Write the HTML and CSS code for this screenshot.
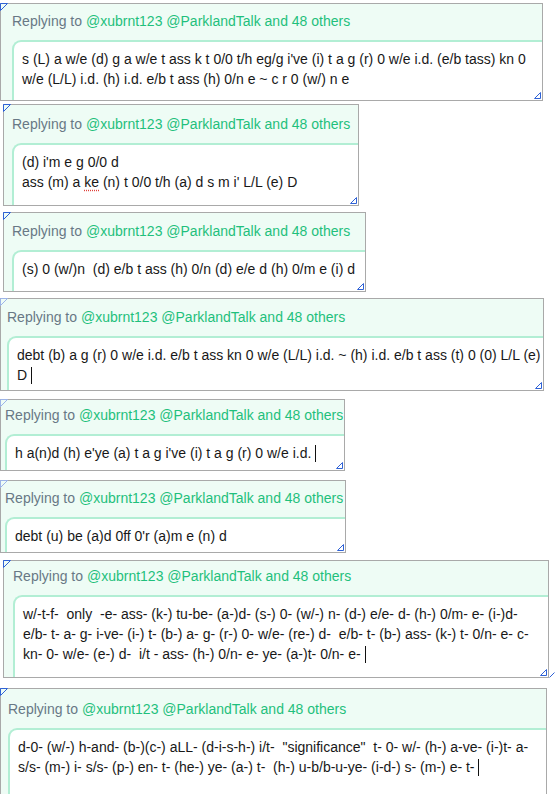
FILE: index.html
```html
<!DOCTYPE html>
<html lang="en">
<head>
    <meta charset="UTF-8">
    <meta name="viewport" content="width=device-width, initial-scale=1.0">
    <title>Replies</title>
    <link rel="stylesheet" href="styles.css">
</head>
<body>
    <div class="shot shot-1">
        <div class="clip">
            <div class="reply-to">Replying to <span class="handles">@xubrnt123 @ParklandTalk and 48 others</span></div>
            <div class="box"><p class="text">s (L) a w/e (d) g a w/e t ass k t 0/0 t/h eg/g i've (i) t a g (r) 0 w/e i.d. (e/b tass) kn 0<br>w/e (L/L) i.d. (h) i.d. e/b t ass (h) 0/n e ~ c r 0 (w/) n e</p></div>
        </div>
        <svg class="mark-tl" width="8" height="8" viewBox="0 0 8 8"><path d="M0.5 7.5V0.5H7.5Z"/></svg>
        <svg class="grip" width="7" height="7" viewBox="0 0 7 7"><path d="M0.5 6.5L6.5 0.5V6.5Z"/></svg>
    </div>

    <div class="shot shot-2">
        <div class="clip">
            <div class="reply-to">Replying to <span class="handles">@xubrnt123 @ParklandTalk and 48 others</span></div>
            <div class="box"><p class="text">(d) i'm e g 0/0 d<br>ass (m) a <span class="typo">ke</span> (n) t 0/0 t/h (a) d s m i' L/L (e) D</p></div>
        </div>
        <svg class="mark-tl" width="8" height="8" viewBox="0 0 8 8"><path d="M0.5 7.5V0.5H7.5Z"/></svg>
        <svg class="grip" width="7" height="7" viewBox="0 0 7 7"><path d="M0.5 6.5L6.5 0.5V6.5Z"/></svg>
    </div>

    <div class="shot shot-3">
        <div class="clip">
            <div class="reply-to">Replying to <span class="handles">@xubrnt123 @ParklandTalk and 48 others</span></div>
            <div class="box"><p class="text">(s) 0 (w/)n  (d) e/b t ass (h) 0/n (d) e/e d (h) 0/m e (i) d</p></div>
        </div>
        <svg class="mark-tl" width="8" height="8" viewBox="0 0 8 8"><path d="M0.5 7.5V0.5H7.5Z"/></svg>
        <svg class="grip" width="7" height="7" viewBox="0 0 7 7"><path d="M0.5 6.5L6.5 0.5V6.5Z"/></svg>
    </div>

    <div class="shot shot-4">
        <div class="clip">
            <div class="reply-to">Replying to <span class="handles">@xubrnt123 @ParklandTalk and 48 others</span></div>
            <div class="box"><p class="text">debt (b) a g (r) 0 w/e i.d. e/b t ass kn 0 w/e (L/L) i.d. ~ (h) i.d. e/b t ass (t) 0 (0) L/L (e)<br>D <span class="caret"></span></p></div>
        </div>
        <svg class="mark-tl faint" width="8" height="8" viewBox="0 0 8 8"><path d="M0.5 7.5V0.5H7.5Z"/></svg>
        <svg class="grip" width="7" height="7" viewBox="0 0 7 7"><path d="M0.5 6.5L6.5 0.5V6.5Z"/></svg>
    </div>

    <div class="shot shot-5">
        <div class="clip">
            <div class="reply-to">Replying to <span class="handles">@xubrnt123 @ParklandTalk and 48 others</span></div>
            <div class="box"><p class="text">h a(n)d (h) e'ye (a) t a g i've (i) t a g (r) 0 w/e i.d. <span class="caret"></span></p></div>
        </div>
        <svg class="mark-tl faint" width="8" height="8" viewBox="0 0 8 8"><path d="M0.5 7.5V0.5H7.5Z"/></svg>
        <svg class="grip" width="7" height="7" viewBox="0 0 7 7"><path d="M0.5 6.5L6.5 0.5V6.5Z"/></svg>
    </div>

    <div class="shot shot-6">
        <div class="clip">
            <div class="reply-to">Replying to <span class="handles">@xubrnt123 @ParklandTalk and 48 others</span></div>
            <div class="box"><p class="text">debt (u) be (a)d 0ff 0'r (a)m e (n) d</p></div>
        </div>
        <svg class="mark-tl faint" width="8" height="8" viewBox="0 0 8 8"><path d="M0.5 7.5V0.5H7.5Z"/></svg>
        <svg class="grip" width="7" height="7" viewBox="0 0 7 7"><path d="M0.5 6.5L6.5 0.5V6.5Z"/></svg>
    </div>

    <div class="shot shot-7">
        <div class="clip">
            <div class="reply-to">Replying to <span class="handles">@xubrnt123 @ParklandTalk and 48 others</span></div>
            <div class="box"><p class="text">w/-t-f-  only  -e- ass- (k-) tu-be- (a-)d- (s-) 0- (w/-) n- (d-) e/e- d- (h-) 0/m- e- (i-)d-<br>e/b- t- a- g- i-ve- (i-) t- (b-) a- g- (r-) 0- w/e- (re-) d-  e/b- t- (b-) ass- (k-) t- 0/n- e- c-<br>kn- 0- w/e- (e-) d-  i/t - ass- (h-) 0/n- e- ye- (a-)t- 0/n- e- <span class="caret"></span></p></div>
        </div>
        <svg class="mark-tl" width="8" height="8" viewBox="0 0 8 8"><path d="M0.5 7.5V0.5H7.5Z"/></svg>
        <svg class="grip" width="7" height="7" viewBox="0 0 7 7"><path d="M0.5 6.5L6.5 0.5V6.5Z"/></svg>
        <svg class="grip-out" width="6" height="6" viewBox="0 0 6 6"><path d="M0.5 5.5L5.5 0.5"/></svg>
    </div>

    <div class="shot shot-8">
        <div class="clip">
            <div class="reply-to">Replying to <span class="handles">@xubrnt123 @ParklandTalk and 48 others</span></div>
            <div class="box"><p class="text">d-0- (w/-) h-and- (b-)(c-) aLL- (d-i-s-h-) i/t-  "significance"  t- 0- w/- (h-) a-ve- (i-)t- a-<br>s/s- (m-) i- s/s- (p-) en- t- (he-) ye- (a-) t-  (h-) u-b/b-u-ye- (i-d-) s- (m-) e- t- <span class="caret"></span></p></div>
        </div>
        <svg class="mark-tl" width="8" height="8" viewBox="0 0 8 8"><path d="M0.5 7.5V0.5H7.5Z"/></svg>
    </div>
</body>
</html>
```

FILE: styles.css
```css
body {
    margin: 0;
    background: #ffffff;
    font-family: 'Liberation Sans', Arial, sans-serif;
}

.shot {
    position: relative;
    box-sizing: border-box;
    border: 1px solid #a9a9a9;
    background-color: #eefcf5;
}
.clip {
    box-sizing: border-box;
    height: 100%;
    overflow: hidden;
}

.reply-to {
    font-size: 14px;
    line-height: 20px;
    color: #687885;
    white-space: nowrap;
    padding-bottom: 9px;
}
.handles {
    color: #1fc07c;
}

.box {
    background-color: white;
    border-top: 2px solid #b2eed4;
    border-left: 2px solid #b2eed4;
    border-top-left-radius: 9px;
    padding: 7px 0 0 8px;
    margin-right: -40px;
    height: 300px;
}
.text {
    margin: 0;
    font-size: 14px;
    line-height: 20px;
    color: #181818;
    white-space: pre;
}
.typo {
    text-decoration: underline dotted #e0403a;
    text-underline-offset: 3px;
}
.caret {
    display: inline-block;
    width: 1px;
    height: 17px;
    background-color: #111;
    vertical-align: -4px;
}

/* selection marks left on the screenshot */
.mark-tl, .grip, .grip-out {
    position: absolute;
    fill: none;
    stroke: #2f62d6;
    stroke-width: 1;
}
.mark-tl {
    top: -1px;
    left: -1px;
}
.mark-tl.faint {
    stroke: #9db4e8;
}
.grip {
    right: 1px;
    bottom: 1px;
}
.grip-out {
    right: -7px;
    bottom: -1px;
}

/* each crop has its own size and offset */
.shot-1 { margin-top: 3px; width: 543px; height: 98px; }
.shot-1 .clip { padding: 7px 0 0 11px; }

.shot-2 { margin: 3px 0 0 3px; width: 356px; height: 102px; }
.shot-2 .clip { padding: 9px 0 0 8px; }

.shot-3 { margin: 6px 0 0 3px; width: 363px; height: 80px; }
.shot-3 .clip { padding: 8px 0 0 8px; }

.shot-4 { margin-top: 6px; width: 544px; height: 93px; }
.shot-4 .clip { padding: 8px 0 0 6px; }

.shot-5 { margin-top: 8px; width: 345px; height: 72px; }
.shot-5 .clip { padding: 5px 0 0 4px; }

.shot-6 { margin-top: 9px; width: 346px; height: 73px; }
.shot-6 .clip { padding: 7px 0 0 4px; }

.shot-7 { margin: 7px 0 0 3px; width: 546px; height: 118px; }
.shot-7 .clip { padding: 5px 0 0 9px; }

.shot-8 { margin-top: 10px; width: 547px; height: 130px; }
.shot-8 .clip { padding: 10px 0 0 7px; }
```
